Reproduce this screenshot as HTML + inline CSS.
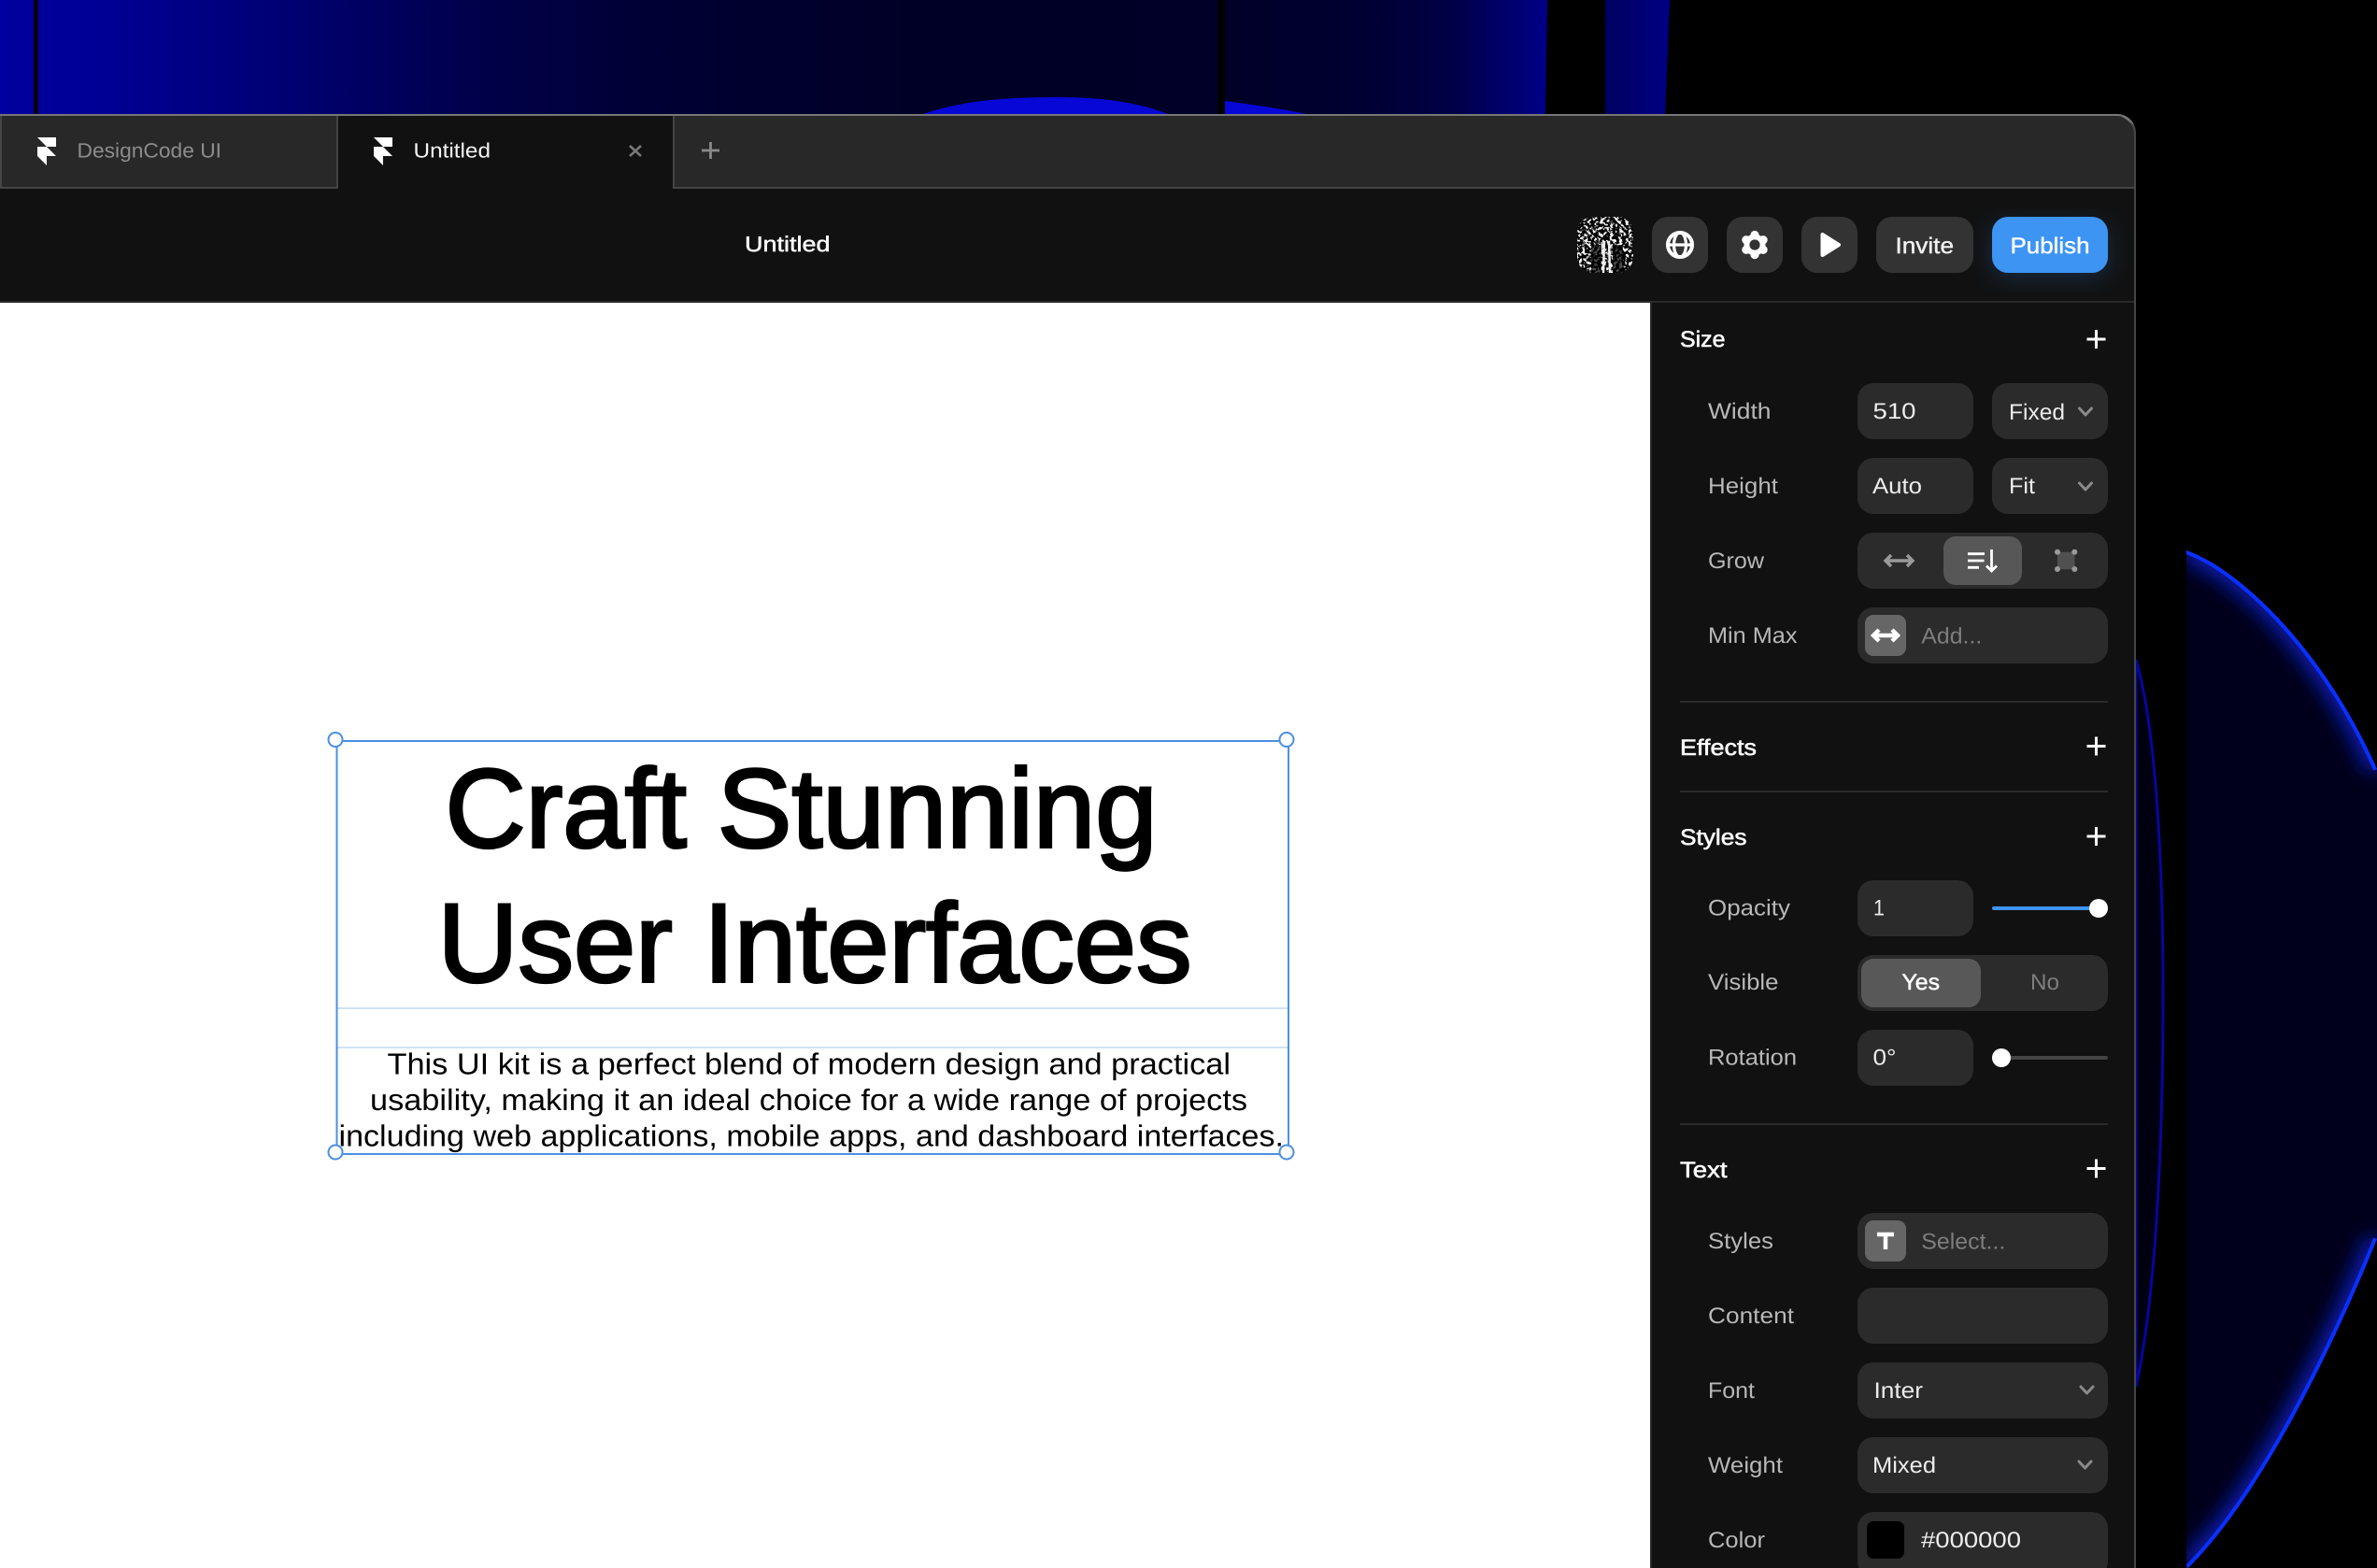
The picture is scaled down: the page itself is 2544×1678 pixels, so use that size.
<!DOCTYPE html>
<html lang="en"><head><meta charset="utf-8"><title>Untitled</title>
<style>
html,body{margin:0;padding:0;background:#000;width:2544px;height:1678px;overflow:hidden}
svg{display:block}
text{font-family:"Liberation Sans",Arial,sans-serif;text-rendering:geometricPrecision}
.l{font-size:24px;fill:#b8b8b8}
.v{font-size:24px;fill:#ededed}
.p{font-size:24px;fill:#7e7e7e}
.h{font-size:24px;fill:#fff;stroke:#fff;stroke-width:.55}
.f{fill:#2b2b2b}
.ch{fill:none;stroke:#8a8a8a;stroke-width:3;stroke-linecap:round;stroke-linejoin:round}
.pl{stroke:#fff;stroke-width:3;fill:none}
.big{font-size:120px;fill:#000;stroke:#000;stroke-width:3}
.para{font-size:32px;fill:#000}
</style></head><body>
<svg width="2544" height="1678" viewBox="0 0 2544 1678" xmlns="http://www.w3.org/2000/svg">
<defs>
<linearGradient id="topg" gradientUnits="userSpaceOnUse" x1="0" y1="0" x2="1655" y2="0">
<stop offset="0" stop-color="#00009e"/><stop offset=".06" stop-color="#000096"/><stop offset=".18" stop-color="#000074"/>
<stop offset=".3" stop-color="#00004c"/><stop offset=".42" stop-color="#000034"/><stop offset=".6" stop-color="#000026"/>
<stop offset=".79" stop-color="#000028"/><stop offset=".88" stop-color="#000032"/><stop offset=".94" stop-color="#000046"/><stop offset="1" stop-color="#000088"/>
</linearGradient>
<linearGradient id="strip" gradientUnits="userSpaceOnUse" x1="1718" y1="0" x2="1786" y2="0">
<stop offset="0" stop-color="#000060"/><stop offset="1" stop-color="#000084"/>
</linearGradient>
<filter id="blur" x="-20%" y="-20%" width="140%" height="140%"><feGaussianBlur stdDeviation="10"/></filter>
<filter id="glow" x="-30%" y="-30%" width="160%" height="160%"><feGaussianBlur stdDeviation="14"/></filter>
<filter id="noise" x="0" y="0" width="100%" height="100%" color-interpolation-filters="sRGB">
<feTurbulence type="fractalNoise" baseFrequency=".3" numOctaves="3" seed="7"/>
<feColorMatrix type="matrix" values="0 0 0 0 1  0 0 0 0 1  0 0 0 0 1  7 7 0 0 -7"/>
<feComposite in2="SourceAlpha" operator="in"/>
</filter>
<clipPath id="rs"><path d="M2340 589C2400 610 2490 700 2544 823V1326C2510 1410 2430 1590 2342 1678H2340Z"/></clipPath>
<clipPath id="av"><rect x="1688" y="232" width="60" height="60" rx="17"/></clipPath>
</defs>

<!-- background -->
<rect width="2544" height="1678" fill="#000"/>
<path d="M0 0H1656L1654 124H0Z" fill="url(#topg)"/>
<rect x="36" y="0" width="5" height="122" fill="#080014"/>
<rect x="1303" y="0" width="8" height="122" fill="#000"/>
<path d="M988 122C1035 106 1085 104 1135 104C1180 104 1220 110 1250 122Z" fill="#0707d6"/>
<path d="M1311 108C1340 112 1370 116 1398 122H1311Z" fill="#0707d6"/>
<path d="M1718 0H1787L1782 124H1718Z" fill="url(#strip)"/>

<path d="M2340 589C2400 610 2490 700 2544 823V1326C2510 1410 2430 1590 2342 1678H2340Z" fill="#00001b"/>
<g clip-path="url(#rs)">
<path d="M2340 589C2400 610 2490 700 2544 823M2544 1326C2510 1410 2430 1590 2342 1678" fill="none" stroke="#0a22d0" stroke-width="24" filter="url(#blur)" opacity=".8"/>
<path d="M2340 589C2400 610 2490 700 2544 823M2544 1326C2510 1410 2430 1590 2342 1678" fill="none" stroke="#0a30ff" stroke-width="8"/>
</g>
<path d="M2286 706C2305 770 2315 900 2315 1063C2315 1250 2305 1400 2286 1484Z" fill="#000010" stroke="#0606a0" stroke-width="3"/>

<!-- window -->
<path d="M0 122H2266A20 20 0 0 1 2286 142V1678H0Z" fill="#454545"/>
<path d="M0 122H2266A20 20 0 0 1 2284 134L2270 124H0Z" fill="#777"/>
<path d="M2 124H2264A20 20 0 0 1 2284 144V202H2Z" fill="#282828"/>
<rect x="0" y="200" width="2284" height="2" fill="#444"/>
<rect x="360" y="124" width="2" height="78" fill="#444"/>
<rect x="362" y="124" width="358" height="78" fill="#111"/>
<rect x="720" y="124" width="2" height="78" fill="#444"/>
<rect x="0" y="202" width="2284" height="121" fill="#111"/>
<rect x="0" y="322" width="2284" height="2" fill="#2a2a2a"/>

<!-- tabs -->
<path d="M40 147H60V157H50ZM40 157H50L60 167H50V177L40 167Z" fill="#fff"/>
<text x="82.500" y="168.500" font-size="22" fill="#8c8c8c" textLength="154.500" lengthAdjust="spacingAndGlyphs">DesignCode UI</text>
<path d="M400 147H420V157H410ZM400 157H410L420 167H410V177L400 167Z" fill="#fff"/>
<text x="442.500" y="168.500" font-size="22" fill="#f4f4f4" textLength="82.500" lengthAdjust="spacingAndGlyphs">Untitled</text>
<path d="M674 156L686 167M686 156L674 167" stroke="#777" stroke-width="2.600" fill="none"/>
<path d="M751 161H770M760.500 152V170" stroke="#8a8a8a" stroke-width="2.800" fill="none"/>

<!-- toolbar -->
<text x="797" y="269" font-size="23" fill="#fff" stroke="#fff" stroke-width=".45" textLength="91.500" lengthAdjust="spacingAndGlyphs">Untitled</text>
<g clip-path="url(#av)">
<rect x="1688" y="232" width="60" height="60" fill="#000"/>
<rect x="1688" y="232" width="60" height="60" fill="#fff" filter="url(#noise)"/>
<path d="M1703 262h11v30h-11zM1726 262h11v30h-11z" fill="#000" opacity=".7"/>
<path d="M1717 258L1716 292M1722 258L1723 292" stroke="#eee" stroke-width="2.500" fill="none"/>
</g>
<rect x="1768" y="232" width="60" height="60" rx="17" fill="#333"/>
<circle cx="1798" cy="262" r="13" fill="none" stroke="#fff" stroke-width="4"/>
<ellipse cx="1798" cy="262" rx="6.500" ry="13" fill="none" stroke="#fff" stroke-width="3.200"/>
<path d="M1785 262H1811" stroke="#fff" stroke-width="3.200"/>
<rect x="1848" y="232" width="60" height="60" rx="17" fill="#333"/>
<g fill="#fff"><circle cx="1878" cy="262" r="11.500"/><circle cx="1878" cy="251.500" r="4.600"/><circle cx="1878" cy="272.500" r="4.600"/><circle cx="1868.900" cy="256.700" r="4.600"/><circle cx="1887.100" cy="256.700" r="4.600"/><circle cx="1868.900" cy="267.300" r="4.600"/><circle cx="1887.100" cy="267.300" r="4.600"/></g>
<circle cx="1878" cy="262" r="5.600" fill="#333"/>
<rect x="1928" y="232" width="60" height="60" rx="17" fill="#333"/>
<path d="M1950.500 251V273L1968 262Z" fill="#fff" stroke="#fff" stroke-width="4" stroke-linejoin="round"/>
<rect x="2008" y="232" width="104" height="60" rx="17" fill="#333"/>
<text x="2028.500" y="271" font-size="24" fill="#f2f2f2" stroke="#f2f2f2" stroke-width=".4" textLength="62.500" lengthAdjust="spacingAndGlyphs">Invite</text>
<rect x="2132" y="240" width="124" height="56" rx="17" fill="#2b73c5" filter="url(#glow)" opacity=".3"/>
<rect x="2132" y="232" width="124" height="60" rx="17" fill="#3d94f3"/>
<text x="2151.500" y="271" font-size="24" fill="#fff" stroke="#fff" stroke-width=".4" textLength="85" lengthAdjust="spacingAndGlyphs">Publish</text>

<!-- canvas and panel -->
<rect x="0" y="324" width="1766" height="1354" fill="#fff"/>
<rect x="1766" y="324" width="518" height="1354" fill="#111"/>
<rect x="1766" y="324" width="2" height="1354" fill="#2a2a2a"/>

<!-- canvas content -->
<text class="big" x="476.500" y="906.500" textLength="762" lengthAdjust="spacingAndGlyphs">Craft Stunning</text>
<text class="big" x="468.500" y="1050.500" textLength="807" lengthAdjust="spacingAndGlyphs">User Interfaces</text>
<rect x="361" y="1078" width="1018" height="2" fill="#cfe2f8"/>
<rect x="361" y="1120" width="1018" height="2" fill="#cfe2f8"/>
<text class="para" x="414.500" y="1149.500" textLength="902.500" lengthAdjust="spacingAndGlyphs">This UI kit is a perfect blend of modern design and practical</text>
<text class="para" x="396" y="1188" textLength="939" lengthAdjust="spacingAndGlyphs">usability, making it an ideal choice for a wide range of projects</text>
<text class="para" x="362.500" y="1226.500" textLength="1011.500" lengthAdjust="spacingAndGlyphs">including web applications, mobile apps, and dashboard interfaces.</text>
<rect x="360.500" y="793" width="1018.500" height="442" fill="none" stroke="#4a90e2" stroke-width="2"/>
<g fill="#fff" stroke="#4a90e2" stroke-width="2"><circle cx="359" cy="791.500" r="7.500"/><circle cx="1377" cy="791.500" r="7.500"/><circle cx="359" cy="1233" r="7.500"/><circle cx="1377" cy="1233" r="7.500"/></g>

<!-- size -->
<text class="h" x="1798" y="371" textLength="48.500" lengthAdjust="spacingAndGlyphs">Size</text>
<path class="pl" d="M2233.500 363H2253.500M2243.500 353V373"/>
<text class="l" x="1828" y="448" textLength="67.500" lengthAdjust="spacingAndGlyphs">Width</text>
<rect class="f" x="1988" y="410" width="124" height="60" rx="17"/>
<text class="v" x="2004.500" y="448" textLength="46" lengthAdjust="spacingAndGlyphs">510</text>
<rect class="f" x="2132" y="410" width="124" height="60" rx="17"/>
<text class="v" x="2150" y="449" textLength="60" lengthAdjust="spacingAndGlyphs">Fixed</text>
<path class="ch" d="M2225.500 437L2232 444L2238.500 437"/>
<text class="l" x="1828" y="528" textLength="75" lengthAdjust="spacingAndGlyphs">Height</text>
<rect class="f" x="1988" y="490" width="124" height="60" rx="17"/>
<text class="v" x="2004" y="528" textLength="53" lengthAdjust="spacingAndGlyphs">Auto</text>
<rect class="f" x="2132" y="490" width="124" height="60" rx="17"/>
<text class="v" x="2150" y="528" textLength="28" lengthAdjust="spacingAndGlyphs">Fit</text>
<path class="ch" d="M2225.500 517L2232 524L2238.500 517"/>
<text class="l" x="1828" y="608" textLength="60" lengthAdjust="spacingAndGlyphs">Grow</text>
<rect class="f" x="1988" y="570" width="268" height="60" rx="17"/>
<rect x="2080" y="574" width="84" height="52" rx="13" fill="#575757"/>
<path d="M2018 600H2047M2024 594L2018 600L2024 606M2041 594L2047 600L2041 606" fill="none" stroke="#9a9a9a" stroke-width="3.400"/>
<path d="M2106 592.700H2124M2106 600H2123.500M2106 607.300H2118" stroke="#fff" stroke-width="2.800" fill="none"/>
<path d="M2131.500 588V611M2126 605.500L2131.500 611L2137 605.500" stroke="#fff" stroke-width="2.800" fill="none"/>
<rect x="2202" y="590.700" width="18.500" height="18.500" fill="#505050"/>
<g fill="#9a9a9a"><circle cx="2202" cy="590.700" r="3"/><circle cx="2220.300" cy="590.700" r="3"/><circle cx="2202" cy="609" r="3"/><circle cx="2220.300" cy="609" r="3"/></g>
<text class="l" x="1828" y="688" textLength="95.500" lengthAdjust="spacingAndGlyphs">Min Max</text>
<rect class="f" x="1988" y="650" width="268" height="60" rx="17"/>
<rect x="1996" y="658" width="44" height="44" rx="9" fill="#666"/>
<path d="M2005 680H2031M2011 674L2005 680L2011 686M2025 674L2031 680L2025 686" fill="none" stroke="#fff" stroke-width="4.400"/>
<text class="p" x="2056.300" y="688.500" textLength="65" lengthAdjust="spacingAndGlyphs">Add...</text>
<rect x="1798" y="750" width="458" height="2" fill="#2a2a2a"/>

<!-- effects -->
<text class="h" x="1798" y="808" textLength="82" lengthAdjust="spacingAndGlyphs">Effects</text>
<path class="pl" d="M2233.500 798.500H2253.500M2243.500 788.500V808.500"/>
<rect x="1798" y="846" width="458" height="2" fill="#2a2a2a"/>

<!-- styles -->
<text class="h" x="1798" y="904" textLength="71.500" lengthAdjust="spacingAndGlyphs">Styles</text>
<path class="pl" d="M2233.500 895H2253.500M2243.500 885V905"/>
<text class="l" x="1828" y="979.500" textLength="88" lengthAdjust="spacingAndGlyphs">Opacity</text>
<rect class="f" x="1988" y="942" width="124" height="60" rx="17"/>
<text class="v" x="2005" y="979.500" textLength="12" lengthAdjust="spacingAndGlyphs">1</text>
<rect x="2132" y="970" width="116" height="4" rx="2" fill="#3d94f3"/>
<circle cx="2246" cy="972" r="10" fill="#fff"/>
<text class="l" x="1828" y="1059" textLength="75.500" lengthAdjust="spacingAndGlyphs">Visible</text>
<rect class="f" x="1988" y="1022" width="268" height="60" rx="17"/>
<rect x="1992" y="1026" width="128" height="52" rx="13" fill="#585858"/>
<text x="2035.500" y="1059" font-size="24" fill="#fff" stroke="#fff" stroke-width=".5" textLength="40.500" lengthAdjust="spacingAndGlyphs">Yes</text>
<text class="p" x="2173" y="1059" textLength="31" lengthAdjust="spacingAndGlyphs">No</text>
<text class="l" x="1828" y="1139.500" textLength="95" lengthAdjust="spacingAndGlyphs">Rotation</text>
<rect class="f" x="1988" y="1102" width="124" height="60" rx="17"/>
<text class="v" x="2004.500" y="1139.500" textLength="25" lengthAdjust="spacingAndGlyphs">0°</text>
<rect x="2140" y="1130" width="116" height="4" rx="2" fill="#444"/>
<circle cx="2142" cy="1132" r="10" fill="#fff"/>
<rect x="1798" y="1202" width="458" height="2" fill="#2a2a2a"/>

<!-- text -->
<text class="h" x="1798" y="1260" textLength="50.500" lengthAdjust="spacingAndGlyphs">Text</text>
<path class="pl" d="M2233.500 1250.500H2253.500M2243.500 1240.500V1260.500"/>
<text class="l" x="1828" y="1336" textLength="70" lengthAdjust="spacingAndGlyphs">Styles</text>
<rect class="f" x="1988" y="1298" width="268" height="60" rx="17"/>
<rect x="1996" y="1306" width="44" height="44" rx="9" fill="#666"/>
<path d="M2009 1321H2027M2018 1321V1337" stroke="#fff" stroke-width="4.500" fill="none"/>
<text class="p" x="2056.300" y="1336.500" textLength="90" lengthAdjust="spacingAndGlyphs">Select...</text>
<text class="l" x="1828" y="1416" textLength="92" lengthAdjust="spacingAndGlyphs">Content</text>
<rect class="f" x="1988" y="1378" width="268" height="60" rx="17"/>
<text class="l" x="1828" y="1496" textLength="50" lengthAdjust="spacingAndGlyphs">Font</text>
<rect class="f" x="1988" y="1458" width="268" height="60" rx="17"/>
<text class="v" x="2005.500" y="1496" textLength="52.500" lengthAdjust="spacingAndGlyphs">Inter</text>
<path class="ch" d="M2227 1484L2233.500 1491L2240 1484"/>
<text class="l" x="1828" y="1576" textLength="80" lengthAdjust="spacingAndGlyphs">Weight</text>
<rect class="f" x="1988" y="1538" width="268" height="60" rx="17"/>
<text class="v" x="2004" y="1576" textLength="68" lengthAdjust="spacingAndGlyphs">Mixed</text>
<path class="ch" d="M2225 1564L2231.500 1571L2238 1564"/>
<text class="l" x="1828" y="1656" textLength="61" lengthAdjust="spacingAndGlyphs">Color</text>
<rect class="f" x="1988" y="1618" width="268" height="70" rx="17"/>
<rect x="1998" y="1628" width="40" height="40" rx="7" fill="#000"/>
<text class="v" x="2056" y="1656" textLength="107" lengthAdjust="spacingAndGlyphs">#000000</text>
</svg>
</body></html>
